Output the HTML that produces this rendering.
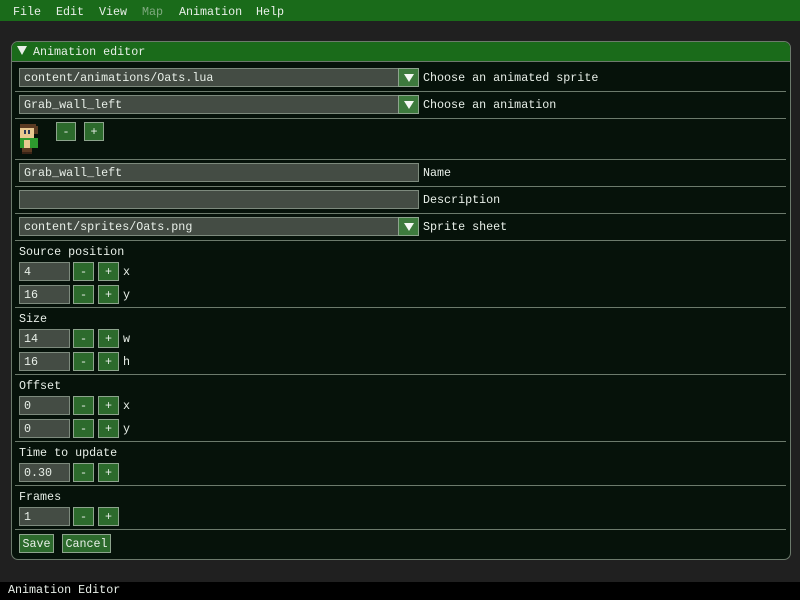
<!DOCTYPE html>
<html><head><meta charset="utf-8"><style>
*{margin:0;padding:0;box-sizing:border-box}
body{width:800px;height:600px;background:#202020;position:relative;overflow:hidden;font-family:"Liberation Mono",monospace;font-size:11.7px;color:#e8efe8}
div{position:absolute}
.t{white-space:pre;line-height:13px}
.in{background:#444c44;border:1px solid #7d8a7d;height:19px;padding:3px 0 0 4px;white-space:pre;line-height:13px}
.b{background:#2c6a2c;border:1px solid #8da48d;height:19px;text-align:center;line-height:18px;white-space:pre}
.sep{left:15px;width:771px;height:1px;background:#6c7a6c}
.arr{background:#3d7a3d;border:1px solid #8da48d;width:21px;height:19px}
.arr:after{content:"";position:absolute;left:5px;top:5px;border-left:5px solid transparent;border-right:5px solid transparent;border-top:8px solid #f4f8f4}
</style></head><body>
<div style="left:0;top:0;width:800px;height:21px;background:#1a6b1a"></div>
<div class="t" style="left:13px;top:6px">File</div>
<div class="t" style="left:56px;top:6px">Edit</div>
<div class="t" style="left:99px;top:6px">View</div>
<div class="t" style="left:142px;top:6px;color:#7faa7f">Map</div>
<div class="t" style="left:179px;top:6px">Animation</div>
<div class="t" style="left:256px;top:6px">Help</div>

<div style="left:11px;top:41px;width:780px;height:519px;background:#06120a;border:1px solid #6c7a6c;border-radius:7px;overflow:hidden">
<div style="left:0;top:0;width:780px;height:20px;background:#1a6b1a;border-bottom:1px solid #6c7a6c"></div>
</div>
<div style="left:17px;top:46px;border-left:5px solid transparent;border-right:5px solid transparent;border-top:9px solid #e8efe8"></div>
<div class="t" style="left:33px;top:46px">Animation editor</div>

<div class="in" style="left:19px;top:68px;width:400px">content/animations/Oats.lua</div>
<div class="arr" style="left:398px;top:68px"></div>
<div class="t" style="left:423px;top:72px">Choose an animated sprite</div>
<div class="sep" style="top:91px"></div>
<div class="in" style="left:19px;top:95px;width:400px">Grab_wall_left</div>
<div class="arr" style="left:398px;top:95px"></div>
<div class="t" style="left:423px;top:99px">Choose an animation</div>
<div class="sep" style="top:118px"></div>

<svg style="position:absolute;left:18px;top:122px" width="24" height="34" viewBox="0 0 12 17" shape-rendering="crispEdges">
<rect x="1" y="1" width="8" height="2" fill="#5a3a22"/><rect x="8" y="2" width="2" height="4" fill="#5a3a22"/>
<rect x="1" y="3" width="7" height="5" fill="#e8c890"/><rect x="3" y="4" width="1" height="2" fill="#2a3a5a"/><rect x="5" y="4" width="1" height="2" fill="#2a3a5a"/>
<rect x="1" y="8" width="9" height="5" fill="#2e9a2e"/><rect x="3" y="9" width="3" height="4" fill="#e8c890"/>
<rect x="2" y="13" width="5" height="2" fill="#5a3a22"/><rect x="2" y="15" width="5" height="1" fill="#3a2416"/>
</svg>
<div class="b" style="left:56px;top:122px;width:20px">-</div>
<div class="b" style="left:84px;top:122px;width:20px">+</div>
<div class="sep" style="top:159px"></div>

<div class="in" style="left:19px;top:163px;width:400px">Grab_wall_left</div>
<div class="t" style="left:423px;top:167px">Name</div>
<div class="sep" style="top:186px"></div>
<div class="in" style="left:19px;top:190px;width:400px"></div>
<div class="t" style="left:423px;top:194px">Description</div>
<div class="sep" style="top:213px"></div>
<div class="in" style="left:19px;top:217px;width:400px">content/sprites/Oats.png</div>
<div class="arr" style="left:398px;top:217px"></div>
<div class="t" style="left:423px;top:221px">Sprite sheet</div>
<div class="sep" style="top:240px"></div>

<div class="t" style="left:19px;top:246px">Source position</div>
<div class="in" style="left:19px;top:262px;width:51px">4</div><div class="b" style="left:73px;top:262px;width:21px">-</div><div class="b" style="left:98px;top:262px;width:21px">+</div><div class="t" style="left:123px;top:266px">x</div>
<div class="in" style="left:19px;top:285px;width:51px">16</div><div class="b" style="left:73px;top:285px;width:21px">-</div><div class="b" style="left:98px;top:285px;width:21px">+</div><div class="t" style="left:123px;top:289px">y</div>
<div class="sep" style="top:307px"></div>

<div class="t" style="left:19px;top:313px">Size</div>
<div class="in" style="left:19px;top:329px;width:51px">14</div><div class="b" style="left:73px;top:329px;width:21px">-</div><div class="b" style="left:98px;top:329px;width:21px">+</div><div class="t" style="left:123px;top:333px">w</div>
<div class="in" style="left:19px;top:352px;width:51px">16</div><div class="b" style="left:73px;top:352px;width:21px">-</div><div class="b" style="left:98px;top:352px;width:21px">+</div><div class="t" style="left:123px;top:356px">h</div>
<div class="sep" style="top:374px"></div>

<div class="t" style="left:19px;top:380px">Offset</div>
<div class="in" style="left:19px;top:396px;width:51px">0</div><div class="b" style="left:73px;top:396px;width:21px">-</div><div class="b" style="left:98px;top:396px;width:21px">+</div><div class="t" style="left:123px;top:400px">x</div>
<div class="in" style="left:19px;top:419px;width:51px">0</div><div class="b" style="left:73px;top:419px;width:21px">-</div><div class="b" style="left:98px;top:419px;width:21px">+</div><div class="t" style="left:123px;top:423px">y</div>
<div class="sep" style="top:441px"></div>

<div class="t" style="left:19px;top:447px">Time to update</div>
<div class="in" style="left:19px;top:463px;width:51px">0.30</div><div class="b" style="left:73px;top:463px;width:21px">-</div><div class="b" style="left:98px;top:463px;width:21px">+</div>
<div class="sep" style="top:485px"></div>

<div class="t" style="left:19px;top:491px">Frames</div>
<div class="in" style="left:19px;top:507px;width:51px">1</div><div class="b" style="left:73px;top:507px;width:21px">-</div><div class="b" style="left:98px;top:507px;width:21px">+</div>
<div class="sep" style="top:529px"></div>

<div class="b" style="left:19px;top:534px;width:35px">Save</div>
<div class="b" style="left:62px;top:534px;width:49px">Cancel</div>

<div style="left:0;top:582px;width:800px;height:18px;background:#000"></div>
<div class="t" style="left:8px;top:584px">Animation Editor</div>
</body></html>
